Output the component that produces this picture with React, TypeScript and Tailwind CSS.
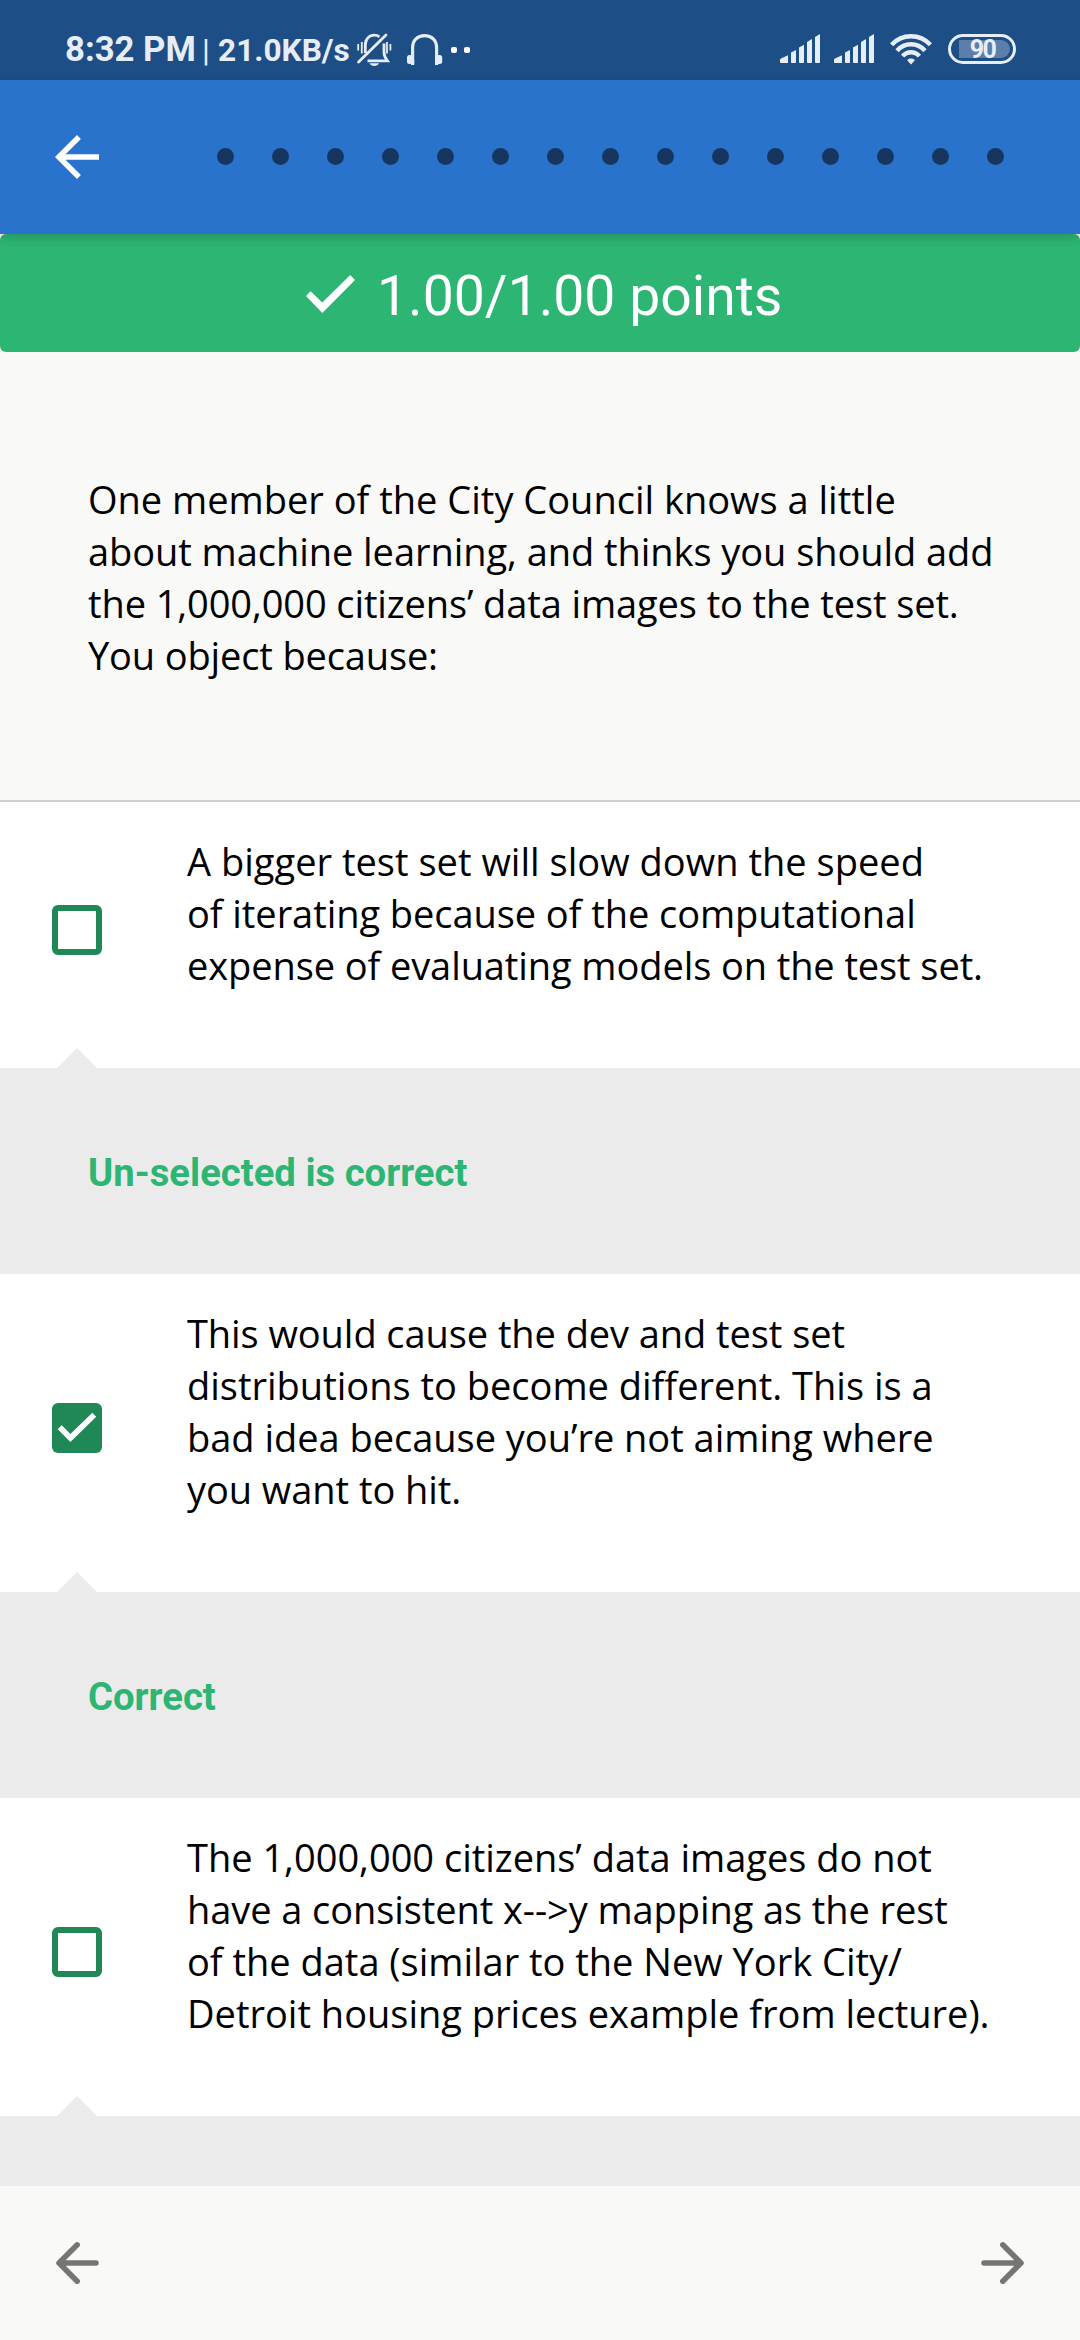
import { Fragment } from "react";

type Line = [text: string, tracking: string];

type Option = {
  checked: boolean;
  lines: Line[];
  feedback?: string;
};

const questionLines: Line[] = [
  ["One member of the City Council knows a little", "tracking-normal"],
  ["about machine learning, and thinks you should add", "tracking-[-0.055px]"],
  ["the 1,000,000 citizens’ data images to the test set.", "tracking-[-0.1px]"],
  ["You object because:", "tracking-[-0.14px]"],
];

const options: Option[] = [
  {
    checked: false,
    lines: [
      ["A bigger test set will slow down the speed", "tracking-[0.02px]"],
      ["of iterating because of the computational", "tracking-[-0.06px]"],
      ["expense of evaluating models on the test set.", "tracking-[-0.09px]"],
    ],
    feedback: "Un-selected is correct",
  },
  {
    checked: true,
    lines: [
      ["This would cause the dev and test set", "tracking-[-0.07px]"],
      ["distributions to become different. This is a", "tracking-normal"],
      ["bad idea because you’re not aiming where", "tracking-[-0.02px]"],
      ["you want to hit.", "tracking-[-0.05px]"],
    ],
    feedback: "Correct",
  },
  {
    checked: false,
    lines: [
      ["The 1,000,000 citizens’ data images do not", "tracking-[-0.01px]"],
      ["have a consistent x-->y mapping as the rest", "tracking-[-0.08px]"],
      ["of the data (similar to the New York City/", "tracking-[-0.01px]"],
      ["Detroit housing prices example from lecture).", "tracking-normal"],
    ],
  },
];

function MutedBell() {
  return (
    <svg className="ml-[7px] h-9 w-9 shrink-0" viewBox="356 32 36 36" fill="none" stroke="#e6edf7" strokeWidth="2.8">
      <path d="M365.3 53V45c0-6 4-9.8 9-9.8 2 0 3.8.6 5.2 1.6" />
      <path d="M384 43.5v8.8c0 3 1.2 5.6 3.4 8.5H367.5" />
      <path d="M358.6 62 386 35" strokeLinecap="round" />
      <path d="M358.2 44v6.5M361.8 42v11.5M387 42v11.5M390.4 44v6.5" strokeWidth="1.8" />
      <path d="M369.5 63.3h9.6c-1 1.8-2.6 2.8-4.8 2.8s-3.8-1-4.8-2.8z" fill="#e6edf7" stroke="none" />
    </svg>
  );
}

function Headphones() {
  return (
    <svg className="ml-[13px] h-9 w-[38px] shrink-0" viewBox="405 32 38 36" fill="none">
      <path d="M412.6 64V47.6c0-7.5 5-12 12-12s12 4.5 12 12V64" stroke="#e6edf7" strokeWidth="3.2" />
      <rect x="407" y="55" width="6" height="9" rx="2.5" fill="#e6edf7" />
      <rect x="436.2" y="55" width="6" height="9" rx="2.5" fill="#e6edf7" />
      <path d="M411 60h3.2v5H411zM435 60h3.2v5H435z" fill="#e6edf7" />
    </svg>
  );
}

function Signal() {
  return (
    <svg className="h-[30px] w-10 shrink-0" viewBox="0 0 40 30" fill="#e6edf7">
      <path d="M1 24.5 8 21.3V28.5a.5.5 0 0 1-.5.5H.8a.8.8 0 0 1-.8-.8v-2.2c0-.7.4-1.2 1-1.5z" />
      <path d="M11 18.5 16 16v12.2a.8.8 0 0 1-.8.8h-3.4a.8.8 0 0 1-.8-.8z" />
      <path d="M19 13.5 24 10.7v17.5a.8.8 0 0 1-.8.8h-3.4a.8.8 0 0 1-.8-.8z" />
      <path d="M27 8 32 5v23.2a.8.8 0 0 1-.8.8h-3.4a.8.8 0 0 1-.8-.8z" />
      <path d="M35 3 40 0v28.2a.8.8 0 0 1-.8.8h-3.4a.8.8 0 0 1-.8-.8z" />
    </svg>
  );
}

function Wifi() {
  return (
    <svg className="ml-4 h-[31px] w-[42px] shrink-0" viewBox="0 0 42 31" fill="none" stroke="#e6edf7" strokeWidth="4.4">
      <path d="M1.6 10.8C6.5 5.4 13.3 2.2 21 2.2s14.5 3.2 19.4 8.600" />
      <path d="M7 16.7C10.6 12.700 15.500 10.300 21 10.300s10.400 2.400 14 6.400" />
      <path d="M12.600 22.200c2.100-2.500 5-4 8.400-4s6.300 1.500 8.400 4" />
      <path d="M21 24.600c1.700 0 3 .6 3.900 1.700L21 30.500l-3.900-4.200c.9-1.100 2.200-1.700 3.900-1.700z" fill="#e6edf7" stroke="none" />
    </svg>
  );
}

function Battery() {
  return (
    <div className="relative ml-4 flex h-[30px] w-[68px] shrink-0 items-center justify-center rounded-full border-[3px] border-[#e6edf7]">
      <div className="h-[18px] w-[51px] translate-x-[2px] rounded-r-full bg-[#5b7eaa]" />
      <span className="absolute inset-0 flex items-center justify-center pl-px font-['Roboto',sans-serif] text-[25px] leading-none font-bold tracking-[-1.5px] text-[#e6edf7]">
        90
      </span>
    </div>
  );
}

function StatusBar() {
  return (
    <div className="flex h-20 items-start bg-[#1d4e86] pt-[31px] pr-16 pl-[65px] font-['Roboto',sans-serif] text-[#e6edf7]">
      <div className="flex h-[38px] items-center">
        <div className="flex items-baseline leading-[38px]">
          <span className="w-[137px] text-[34.7px] font-bold whitespace-nowrap">8:32 PM</span>
          <span className="w-4 text-[32px]">|</span>
          <span className="w-[131px] text-[31.6px] font-bold whitespace-nowrap">21.0KB/s</span>
        </div>
        <MutedBell />
        <Headphones />
        <div className="ml-[8px] flex gap-[7px]">
          <span className="h-[6px] w-[6px] rounded-[2px] bg-white" />
          <span className="h-[6px] w-[6px] rounded-[2px] bg-white" />
        </div>
      </div>
      <div className="mt-[3px] ml-auto flex items-start">
        <div className="flex gap-[14px]">
          <Signal />
          <Signal />
        </div>
        <Wifi />
        <Battery />
      </div>
    </div>
  );
}

function Header() {
  return (
    <header className="relative z-10 flex h-[154px] items-center bg-[#2973cc] pl-11 shadow-[0_3px_10px_rgba(0,0,0,0.2)]">
      <svg className="h-[66px] w-[66px] shrink-0" viewBox="0 0 24 24" fill="#ffffff">
        <path d="M20 11H7.830l5.590-5.590L12 4l-8 8 8 8 1.410-1.410L7.830 13H20v-2z" />
      </svg>
      <div className="mb-px ml-[107px] flex gap-[38px]">
        {Array.from({ length: 15 }, (_, i) => (
          <span key={i} className="h-[17px] w-[17px] rounded-full bg-[#16365f]" />
        ))}
      </div>
    </header>
  );
}

function ScoreBanner() {
  return (
    <div className="flex h-[118px] items-center rounded-[6px] bg-[#2cb573] pl-[306px]">
      <svg className="mt-[2px] h-[38px] w-[49px] shrink-0" viewBox="0 0 49 38" fill="#ffffff">
        <path d="M0 21 4.600 16.300 16.300 27.500 44.200 0 49 5 16.300 38z" />
      </svg>
      <span className="mt-[7px] ml-[22px] font-['Roboto',sans-serif] text-[55.3px] leading-[64px] whitespace-nowrap text-white">
        1.00/1.00 points
      </span>
    </div>
  );
}

function Checkbox({ checked }: { checked: boolean }) {
  if (!checked) {
    return <span className="mb-[9.5px] h-[50px] w-[50px] shrink-0 rounded-[6px] border-[6px] border-[#208756]" />;
  }
  return (
    <span className="mb-[9.5px] h-[50px] w-[50px] shrink-0 rounded-[6px] bg-[#208756]">
      <svg className="h-[50px] w-[50px]" viewBox="0 0 50 50" fill="#ffffff">
        <path d="M5.700 26.200 9.700 22.300 18.400 30.900 40.300 9.800 44.200 13.800 18.400 39z" />
      </svg>
    </span>
  );
}

function Lines({ lines }: { lines: Line[] }) {
  return (
    <p className="font-['Open_Sans',sans-serif] text-[38px] leading-[52px] whitespace-nowrap text-black">
      {lines.map(([text, tracking]) => (
        <span key={text} className={`block ${tracking}`}>
          {text}
        </span>
      ))}
    </p>
  );
}

function OptionRow({ option }: { option: Option }) {
  return (
    <div className="relative flex items-center bg-white pl-[52px]">
      <Checkbox checked={option.checked} />
      <div className="pt-[33px] pb-[77px] pl-[85px]">
        <Lines lines={option.lines} />
      </div>
      <svg className="absolute bottom-0 left-[57px] h-5 w-10" viewBox="0 0 40 20" fill="#ebebeb">
        <path d="M20 0 40 20H0z" />
      </svg>
    </div>
  );
}

function NavArrow({ flipped = false }: { flipped?: boolean }) {
  return (
    <svg
      className={flipped ? "h-[66px] w-[66px] -scale-x-100" : "h-[66px] w-[66px]"}
      viewBox="0 0 66 66"
      fill="none"
      stroke="#757573"
      strokeWidth="5.5"
      strokeLinecap="round"
      strokeLinejoin="round"
    >
      <path d="M52 33H16M33.2 14.800 15 33l18.200 18.200" />
      <path d="M16 33l3-3v6z" fill="#757573" />
    </svg>
  );
}

export default function App() {
  return (
    <div className="flex h-[2340px] w-[1080px] flex-col overflow-hidden bg-[#f9f9f8]">
      <StatusBar />
      <Header />
      <main className="min-h-0 flex-1 overflow-hidden">
        <ScoreBanner />
        <section className="h-[450px] border-b-2 border-[#d0d0d0] pt-[121px] pl-[88px]">
          <Lines lines={questionLines} />
        </section>
        {options.map((option) => (
          <Fragment key={option.lines[0][0]}>
            <OptionRow option={option} />
            <div className="flex h-[206px] items-center bg-[#ebebeb] pt-[6px] pl-[88px] font-['Roboto',sans-serif] text-[38.25px] font-bold text-[#2cb573]">
              {option.feedback}
            </div>
          </Fragment>
        ))}
      </main>
      <footer className="flex h-[154px] shrink-0 items-center justify-between bg-[#f9f9f8] px-11">
        <NavArrow />
        <NavArrow flipped />
      </footer>
    </div>
  );
}
